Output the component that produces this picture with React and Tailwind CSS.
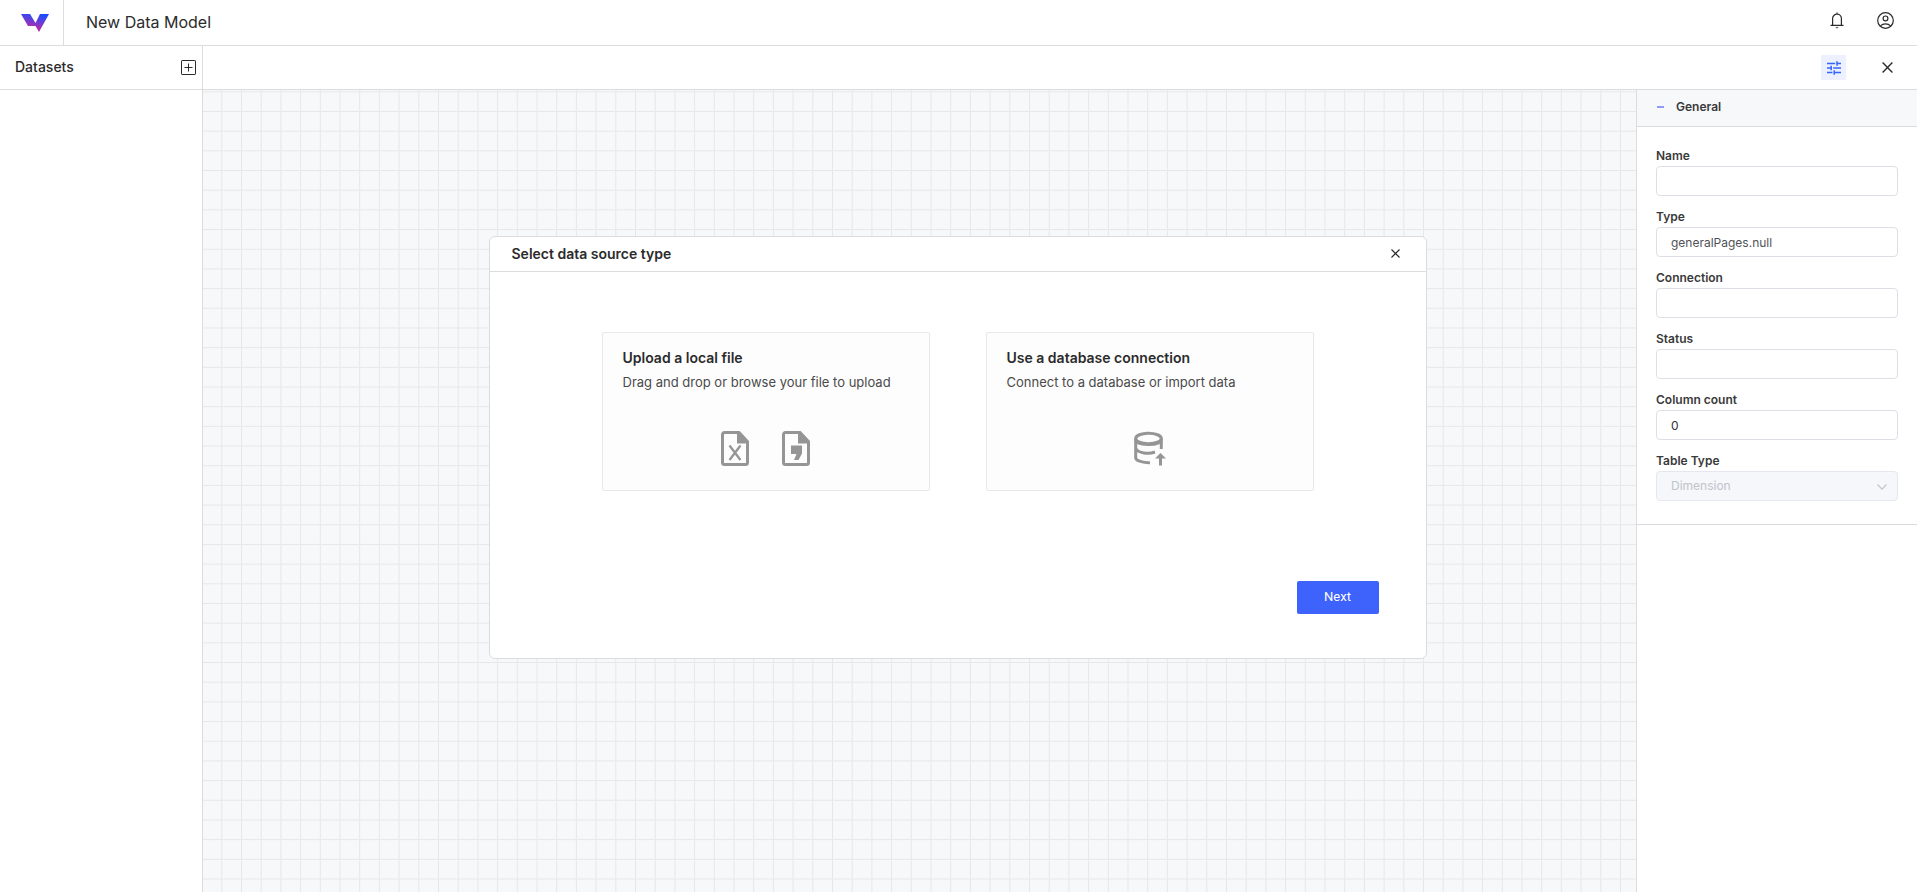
import { useState } from 'react';

const FIELDS = [
  { id: 'name', label: 'Name', value: '', tone: 'text-[#606266]' },
  { id: 'type', label: 'Type', value: 'generalPages.null', tone: 'text-[#505256]' },
  { id: 'connection', label: 'Connection', value: '', tone: 'text-[#606266]' },
  { id: 'status', label: 'Status', value: '', tone: 'text-[#606266]' },
  { id: 'columns', label: 'Column count', value: '0', tone: 'text-[#303133]' },
];

const Logo = () => (
  <svg width="28" height="18" viewBox="0 0 28 18" aria-hidden>
    <defs>
      <linearGradient id="logo-fill" x1="18" y1="0" x2="14" y2="18" gradientUnits="userSpaceOnUse">
        <stop offset="0" stopColor="#1a4dff" />
        <stop offset="0.6" stopColor="#8a35c4" />
        <stop offset="1" stopColor="#d4219a" />
      </linearGradient>
    </defs>
    <path d="M0 0h9l5.5 9L19 0h9L18 18l-3.5-6H7z" fill="url(#logo-fill)" />
  </svg>
);

const BellIcon = () => (
  <svg width="14" height="17" viewBox="0 0 14 17" fill="none" stroke="#2b2b2b" strokeWidth="1.2" aria-hidden>
    <path d="M0.5 13.4h13M2.6 13.4V6.6a4.4 4.4 0 0 1 8.8 0v6.8M7 2.2V0.6" />
    <path d="M5.4 15.2h3.2L7 16.6z" fill="#2b2b2b" stroke="none" />
  </svg>
);

const UserIcon = () => (
  <svg width="17" height="17" viewBox="0 0 17 17" fill="none" stroke="#2b2b2b" strokeWidth="1.2" aria-hidden>
    <circle cx="8.5" cy="8.5" r="7.8" />
    <circle cx="8.5" cy="6.4" r="2.4" />
    <path d="M3.4 13.8c2.6-2.6 7.600-2.6 10.200 0" />
  </svg>
);

const TuneIcon = () => (
  <svg width="14" height="14" viewBox="0 0 14 14" fill="none" stroke="#3366ff" strokeWidth="1.5" aria-hidden>
    <path d="M0 2.5h8.2M10 2.5h4M10 0.2v4.6M0 7h4.2M4.2 4.7v4.6M6.2 7H14M0 11.5h5.4M7.2 11.5H14M7.2 9.2v4.6" />
  </svg>
);

const CloseIcon = ({ size, width }) => (
  <svg width={size} height={size} viewBox="0 0 11 11" stroke="#2b2b2b" strokeWidth={width} aria-hidden>
    <path d="M0.6 0.6l9.8 9.8M10.4 0.6L0.6 10.4" />
  </svg>
);

const PlusSquareIcon = () => (
  <svg width="15" height="15" viewBox="0 0 15 15" fill="none" stroke="#2b2b2b" aria-hidden>
    <rect x="0.5" y="0.5" width="14" height="14" rx="0.6" />
    <path d="M7.5 3.5v8M3.5 7.5h8" />
  </svg>
);

const SheetIcon = ({ children }) => (
  <svg width="28" height="35" viewBox="0 0 28 35" fill="none" aria-hidden>
    <path
      d="M3.5 1.5H18l8.5 9v21a2 2 0 0 1-2 2h-21a2 2 0 0 1-2-2v-28a2 2 0 0 1 2-2z"
      stroke="#959595"
      strokeWidth="3"
    />
    <path d="M16 1h2.5L27 10v2.5H16z" fill="#959595" />
    {children}
  </svg>
);

const DatabaseUploadIcon = () => (
  <svg width="32" height="35" viewBox="0 0 32 35" fill="none" stroke="#959595" strokeWidth="3" aria-hidden>
    <ellipse cx="14.5" cy="7.5" rx="12.8" ry="5.3" />
    <path d="M1.7 7.5v19.2c0 2.7 5.4 5 14.3 5M27.3 7.5V18M1.7 17.4c2.6 5 13 6 19.3 3.6" />
    <path d="M27.3 9c-1 6-24.6 6-25.6 0" />
    <path d="M21 27.5l5.5-5.500 5.500 5.500z" fill="#959595" stroke="none" />
    <path d="M26.500 34.500v-8" />
  </svg>
);

const CanvasGrid = () => (
  <svg className="block size-full" aria-hidden>
    <defs>
      <pattern
        id="canvas-grid"
        width="20"
        height="20"
        patternUnits="userSpaceOnUse"
        patternTransform="translate(-1.4 1.3) scale(0.985 0.984)"
      >
        <path d="M20 0.5H0.5V20" fill="none" stroke="#e6e7e8" />
      </pattern>
    </defs>
    <rect width="100%" height="100%" fill="url(#canvas-grid)" />
  </svg>
);

const SourceCard = ({ title, description, selected, onSelect, children }) => (
  <button
    type="button"
    aria-pressed={selected}
    onClick={onSelect}
    className="flex h-[159px] flex-1 flex-col rounded-[2px] border border-[#e8e8e8] bg-[#fdfdfd] px-5 pt-[15px] text-left"
  >
    <span className="text-sm leading-5 font-semibold text-[#2b2b2b]">{title}</span>
    <span className="mt-1 text-[13px] leading-5 text-[#4a4a4a]">{description}</span>
    <span className="mt-[39px] flex items-center justify-center gap-[33px] self-stretch">{children}</span>
  </button>
);

const SourceDialog = () => {
  const [source, setSource] = useState(null);

  return (
    <div className="pointer-events-none fixed inset-0 flex items-center justify-center pt-0.5 pr-0.5">
      <section
        role="dialog"
        aria-labelledby="dialog-title"
        className="pointer-events-auto w-[938px] rounded-md border border-[#dcdcdc] bg-white"
      >
        <header className="flex h-[35px] items-center justify-between border-b border-[#dcdcdc] pr-[26px] pl-[22px]">
          <h2 id="dialog-title" className="text-sm font-semibold text-[#2b2b2b]">Select data source type</h2>
          <button type="button" aria-label="Close dialog">
            <CloseIcon size={9} width={1.4} />
          </button>
        </header>
        <div className="flex gap-14 px-28 pt-[60px]">
          <SourceCard
            title="Upload a local file"
            description="Drag and drop or browse your file to upload"
            selected={source === 'file'}
            onSelect={() => setSource('file')}
          >
            <SheetIcon>
              <path d="M8.500 14.500l11 14.500M19.500 14.500L8.500 29" stroke="#959595" strokeWidth="2.300" />
            </SheetIcon>
            <SheetIcon>
              <path d="M9 14.500h11v8L16.500 29H12l2.500-6H9z" fill="#959595" />
            </SheetIcon>
          </SourceCard>
          <SourceCard
            title="Use a database connection"
            description="Connect to a database or import data"
            selected={source === 'database'}
            onSelect={() => setSource('database')}
          >
            <DatabaseUploadIcon />
          </SourceCard>
        </div>
        <footer className="flex justify-end px-[47px] pt-[90px] pb-11">
          <button
            type="button"
            className="h-[33px] w-[82px] rounded-[2px] bg-[#3d63fc] font-[Roboto,sans-serif] text-[13px] text-white"
          >
            Next
          </button>
        </footer>
      </section>
    </div>
  );
};

const PropertiesPanel = () => (
  <aside className="w-[281px] shrink-0 border-l border-[#dcdcdc] bg-white">
    <button
      type="button"
      aria-expanded="true"
      className="flex h-[37px] w-full items-center gap-3 border-b border-[#dcdcdc] bg-[#f7f8fa] px-5 pb-0.5 text-xs font-semibold text-[#3a3a3a]"
    >
      <span className="h-0.5 w-[7px] bg-[#9399f7]" />
      General
    </button>
    <form className="flex flex-col gap-[11px] border-b border-[#d8d9dc] px-[19px] pt-[19px] pb-[23px]">
      {FIELDS.map(({ id, label, value, tone }) => (
        <div key={id} className="flex flex-col">
          <label htmlFor={id} className="text-xs leading-5 font-semibold text-[#3a3a3a]">{label}</label>
          <input
            id={id}
            defaultValue={value}
            className={`h-[30px] rounded-sm border border-[#dcdfe6] px-3.5 text-xs outline-none ${tone}`}
          />
        </div>
      ))}
      <div className="flex flex-col">
        <label htmlFor="table-type" className="text-xs leading-5 font-semibold text-[#3a3a3a]">Table Type</label>
        <div className="relative">
          <select
            id="table-type"
            disabled
            className="block h-[30px] w-full appearance-none rounded-sm border border-[#e4e7ed] bg-[#f5f7fa] px-3.5 text-xs text-[#c0c4cc] opacity-100"
          >
            <option>Dimension</option>
          </select>
          <svg
            className="absolute top-3 right-2.5"
            width="12"
            height="8"
            viewBox="0 0 12 8"
            fill="none"
            stroke="#c0c4cc"
            strokeWidth="1.2"
            aria-hidden
          >
            <path d="M1.5 1.5L6 6.2l4.5-4.7" />
          </svg>
        </div>
      </div>
    </form>
  </aside>
);

export default function App() {
  return (
    <div className="flex h-screen flex-col bg-white font-[Inter,sans-serif] text-[#2b2b2b]">
      <header className="flex h-[46px] shrink-0 items-center border-b border-[#dcdcdc]">
        <a href="#home" aria-label="Home" className="flex h-full w-16 items-center justify-center border-r border-[#dcdcdc] pl-[7px]">
          <Logo />
        </a>
        <h1 className="ml-[22px] flex-1 pb-0.5 text-base">New Data Model</h1>
        <div className="flex items-center gap-[33px] pr-[23px] pb-1">
          <button type="button" aria-label="Notifications"><BellIcon /></button>
          <button type="button" aria-label="Account"><UserIcon /></button>
        </div>
      </header>
      <div className="flex h-11 shrink-0 border-b border-[#dcdcdc]">
        <div className="flex w-[203px] items-center justify-between border-r border-[#dcdcdc] pr-1.5 pb-px pl-[15px]">
          <h2 className="text-sm font-medium">Datasets</h2>
          <button type="button" aria-label="Add dataset"><PlusSquareIcon /></button>
        </div>
        <div className="flex flex-1 items-center justify-end gap-9 pr-6">
          <button type="button" aria-label="Properties" className="flex size-[25px] items-center justify-center bg-[#edf1ff]">
            <TuneIcon />
          </button>
          <button type="button" aria-label="Close"><CloseIcon size={11} width={1.4} /></button>
        </div>
      </div>
      <div className="flex min-h-0 flex-1">
        <nav aria-label="Datasets" className="w-[203px] shrink-0 border-r border-[#dcdcdc]" />
        <main className="min-w-0 flex-1 bg-[#f7f8fa]">
          <CanvasGrid />
        </main>
        <PropertiesPanel />
      </div>
      <SourceDialog />
    </div>
  );
}
